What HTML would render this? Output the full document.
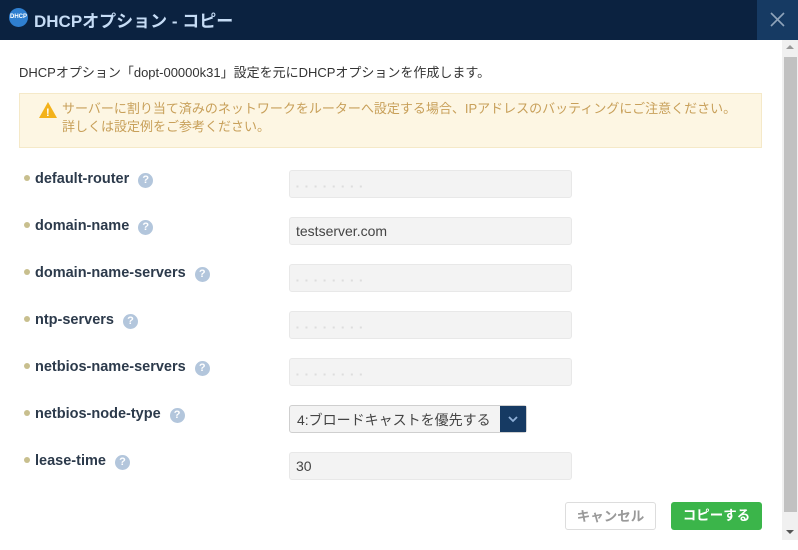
<!DOCTYPE html>
<html><head><meta charset="utf-8"><style>
*{margin:0;padding:0;box-sizing:border-box}
body{width:798px;height:550px;overflow:hidden;background:#fff;font-family:"Liberation Sans","Noto Sans CJK JP",sans-serif;position:relative}
.hdr{position:absolute;left:0;top:0;width:798px;height:40px;background:#0b2240}
.logo{position:absolute;left:9px;top:8px;width:19px;height:19px;border-radius:50%;background:#2f7fd0;color:#fff;font-size:6px;font-weight:bold;text-align:center;line-height:19px}
.ttl{position:absolute;left:34px;top:7px;color:#c6dcf5;font-size:17px;font-weight:bold}
.close{position:absolute;left:757px;top:0;width:41px;height:40px;background:#163a63}
.sb{position:absolute;left:782px;top:40px;width:16px;height:500px;background:#f0f0f0}
.thumb{position:absolute;left:784px;top:57px;width:13px;height:455px;background:#c1c1c1}
.desc{position:absolute;left:19px;top:62px;font-size:13px;color:#333}
.warn{position:absolute;left:19px;top:93px;width:743px;height:55px;background:#fdf6e3;border:1px solid #f5e9c8;color:#c8a05a;font-size:13px;line-height:18px;padding:6px 0 0 42px}
.tri{position:absolute;left:19px;top:8px;width:0;height:0;border-left:9px solid transparent;border-right:9px solid transparent;border-bottom:16px solid #f3b21b}
.tri:after{content:"!";position:absolute;left:-2px;top:2px;color:#fff;font-size:11px;font-weight:bold}
.lbl{position:absolute;left:24px;font-size:14.5px;font-weight:bold;color:#2c3a4b;line-height:18px}
.lbl:before{content:"";display:inline-block;width:6px;height:6px;border-radius:50%;background:#c8bf8e;margin-right:5px;vertical-align:2px}
.q{display:inline-block;width:15px;height:15px;border-radius:50%;background:#b3c6dc;color:#fff;font-size:11px;text-align:center;line-height:15px;margin-left:9px;vertical-align:0px}
.in{position:absolute;left:289px;width:283px;height:28px;background:#f3f3f3;border:1px solid #e8e8e8;border-radius:3px;font-size:14px;color:#444;padding:5px 0 0 6px}
.blur{color:#ddd;letter-spacing:2px;font-size:8px}
.sel{position:absolute;left:289px;top:405px;width:238px;height:28px;background:#f3f3f3;border:1px solid #cfcfcf;border-radius:3px;font-size:14px;color:#444;padding:4px 0 0 7px}
.arr{position:absolute;right:0;top:0;width:26px;height:26px;background:#163a63}
.btn{position:absolute;top:502px;height:28px;border-radius:3px;font-size:13.5px;font-weight:bold;text-align:center;line-height:27px}
</style></head><body>
<div class="hdr"><div class="logo">DHCP</div><div class="ttl">DHCPオプション - コピー</div><div class="close"><svg width="41" height="40"><path d="M14 13L27 26M27 13L14 26" stroke="#8fa3ba" stroke-width="1.6"/></svg></div></div>
<div class="sb"></div><div class="thumb"></div>
<div style="position:absolute;left:786px;top:45px;border-left:4px solid transparent;border-right:4px solid transparent;border-bottom:4px solid #999"></div>
<div style="position:absolute;left:786px;top:530px;border-left:4px solid transparent;border-right:4px solid transparent;border-top:4px solid #555"></div>
<div class="desc">DHCPオプション「dopt-00000k31」設定を元にDHCPオプションを作成します。</div>
<div class="warn"><div class="tri"></div>サーバーに割り当て済みのネットワークをルーターへ設定する場合、IPアドレスのバッティングにご注意ください。<br>詳しくは設定例をご参考ください。</div>
<div class="lbl" style="top:170px">default-router<span class="q">?</span></div>
<div class="in" style="top:170px"><span class="blur">▪ ▪ ▪ ▪ ▪ ▪ ▪ ▪</span></div>
<div class="lbl" style="top:217px">domain-name<span class="q">?</span></div>
<div class="in" style="top:217px">testserver.com</div>
<div class="lbl" style="top:264px">domain-name-servers<span class="q">?</span></div>
<div class="in" style="top:264px"><span class="blur">▪ ▪ ▪ ▪ ▪ ▪ ▪ ▪</span></div>
<div class="lbl" style="top:311px">ntp-servers<span class="q">?</span></div>
<div class="in" style="top:311px"><span class="blur">▪ ▪ ▪ ▪ ▪ ▪ ▪ ▪</span></div>
<div class="lbl" style="top:358px">netbios-name-servers<span class="q">?</span></div>
<div class="in" style="top:358px"><span class="blur">▪ ▪ ▪ ▪ ▪ ▪ ▪ ▪</span></div>
<div class="lbl" style="top:405px">netbios-node-type<span class="q">?</span></div>
<div class="sel">4:ブロードキャストを優先する<div class="arr"><svg width="26" height="26"><path d="M9 11L13 15L17 11" stroke="#8fb0d8" stroke-width="1.8" fill="none"/></svg></div></div>
<div class="lbl" style="top:452px">lease-time<span class="q">?</span></div>
<div class="in" style="top:452px">30</div>
<div class="btn" style="left:565px;width:91px;border:1px solid #ddd;color:#999;background:#fff">キャンセル</div>
<div class="btn" style="left:671px;width:91px;background:#3bb54a;color:#fff">コピーする</div>
</body></html>
